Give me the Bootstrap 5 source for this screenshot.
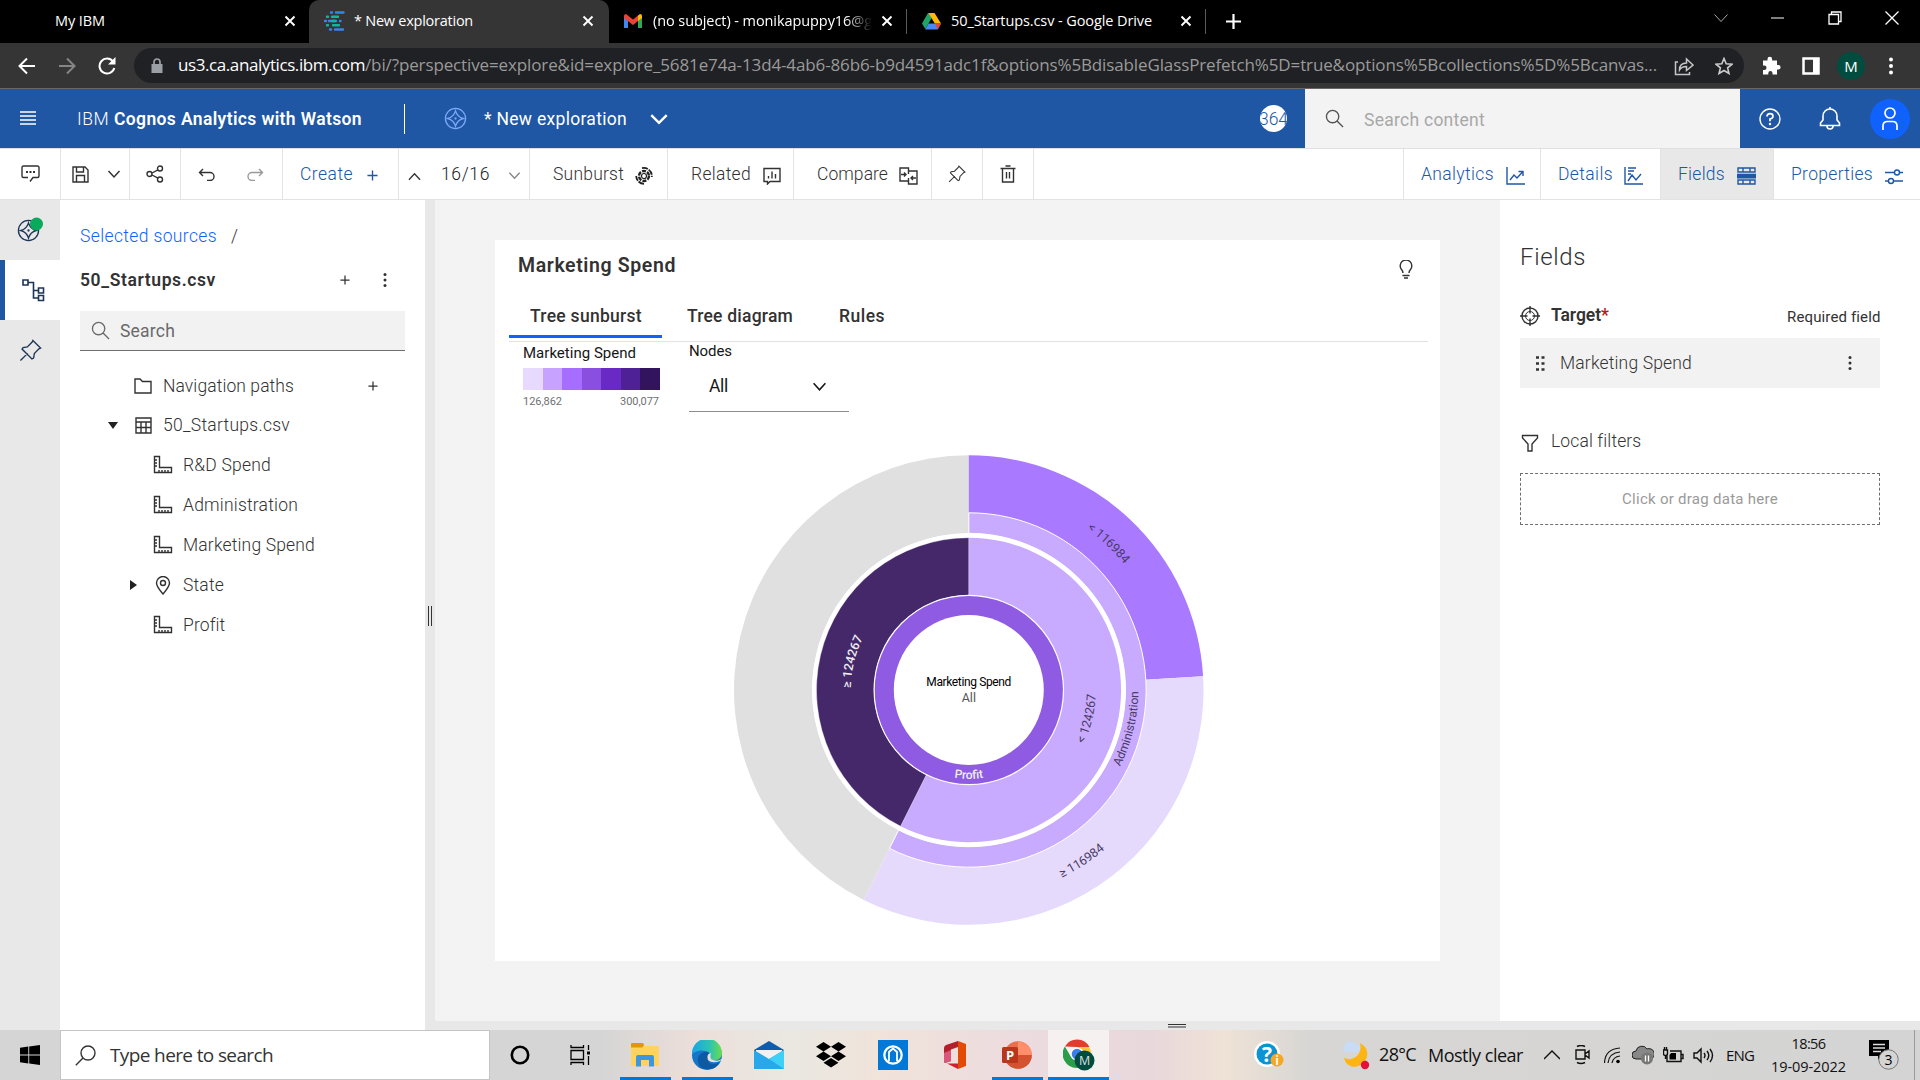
<!DOCTYPE html>
<html lang="en">
<head>
<meta charset="utf-8">
<title>* New exploration</title>
<link rel="stylesheet" href="https://cdn.jsdelivr.net/npm/bootstrap@5.3.0/dist/css/bootstrap.min.css">
<style>
html,body{width:1920px;height:1080px;overflow:hidden}
body{font-family:Roboto,"Open Sans",sans-serif;font-size:17.5px;font-weight:300;line-height:1.2;color:#323232;background:#fff}
b{font-weight:600}
svg{display:block;flex:none}
.ln{fill:none;stroke:currentColor;stroke-width:1.4}
[data-w]{display:block;white-space:nowrap;flex:none}
.sys{font-family:"Open Sans","Noto Sans",sans-serif;font-weight:400}
/* browser window */
.tabstrip{height:43px;background:#000;color:#fff;font-size:14.5px}
.btab{height:43px;flex:none;padding-bottom:1px}
.btab1{width:309px;padding:0 13px 1px 55px}
.btab2{width:300px;padding:0 15px 1px 14px;background:#353535;border-radius:10px 10px 0 0}
.btab3{width:297px;padding:0 13px 1px 15px}
.btab4{width:298px;padding:0 13px 1px 15px}
.vsep{width:1px;height:25px;background:#5a5a5a}
.fade-end{width:219px;overflow:hidden;-webkit-mask-image:linear-gradient(90deg,#000 88%,transparent);mask-image:linear-gradient(90deg,#000 88%,transparent)}
.winc{width:57px;height:36px}
.addr{height:46px;background:#353535;border-bottom:1px solid #666;color:#fff}
.c40{width:40px;flex:none}
.pill{width:1610px;height:35px;border-radius:18px;background:#202124;font-size:17px;color:#9a9a9a;padding-left:16px}
.av{width:28px;height:28px;border-radius:50%;background:#004d40;font-size:15px;color:#fff}
/* application header */
.apphead{height:60px;background:#1f57a4;border-bottom:1px solid #e0e0e0;color:#fff}
.apphead .rule{width:1px;height:30px;background:#fff}
.apphead span{padding-top:1px}
.trial{width:27px;height:27px;border-radius:50%;background:#fff;color:#1f57a4;overflow:hidden}
.gsearch{width:435px;height:59px;background:#f3f3f3;color:#a8a8a8;padding-left:20px}
.apphead .gsearch span{padding-top:3px}
.c60{width:60px;flex:none}
.usr{width:40px;height:40px;border-radius:50%;background:#0f62fe}
.tools{height:51px;border-bottom:1px solid #e3e3e3;background:#fff}
.tc{height:50px;border-right:1px solid #e3e3e3;flex:none}
.tc.blue,.blue{color:#2157a4}
/* gaps between neighbours */
.s7{margin-left:7px}.s9{margin-left:9px}.s10{margin-left:10px}.s11{margin-left:11px}.s12{margin-left:12px}.s14{margin-left:14px}.s17{margin-left:17px}.s18{margin-left:18px}.s20{margin-left:20px}.s23{margin-left:23px}.s32{margin-left:32px}.s41{margin-left:41px}.s42{margin-left:42px}.s39{margin-left:39px}
.w61{width:61px}.w69{width:69px}.w51{width:51px}.w102{width:102px}.w116{width:116px}.w131{width:131px}.w138{width:138px}.w126{width:126px}.w137{width:137px}.w120{width:120px}.w113{width:113px}.w146{width:146px}
.mt3{margin-top:3px}
/* workspace */
.work{height:830px}
.work>*{flex:none}
.rail{width:60px;background:#e8e8e8;color:#1d3557}
.rail>div{height:60px}
.rail .on{background:#fff;box-shadow:inset 5px 0 #1f57a4}
.src{width:365px;padding:0 20px}
.src .r1{height:72px}.src .r2{height:16px}
.srch{height:40px;margin-top:23px;background:#f2f2f2;border-bottom:1px solid #6f6f6f;padding-left:11px;color:#6a6a6a}
.srch span{padding-top:1px}
.trow{height:40px}
.trow.first{margin-top:15px;margin-bottom:-1px}
.split{width:10px;background:#e8e8e8}
.handle{width:4px;height:20px;border:solid #333;border-width:0 1px;margin-bottom:-2px}
.canvas{background:#f3f3f3;width:1065px;padding:40px 0 0 60px}
.vis{width:945px;height:721px;background:#fff}
.vis .head{height:50px;padding:1px 27px 0 23px;font-size:19.5px;font-weight:600}
.vtabs{height:52px;margin:0 12px 0 14px;border-bottom:1px solid #e3e3e3;font-weight:500}
.vtab{height:48px;width:153px;border-bottom:3px solid transparent;padding:16px 0 0 21px}
.vtab.on{border-color:#0f62fe}
.ctl{height:70px;padding-left:28px;color:#161616;font-size:15px}
.swatch>i{width:19.5px;height:22px}
.tiny{font-size:11px;color:#6f6f6f}
.sel{width:160px;height:52px;border-bottom:1px solid #8d8d8d;padding:2px 0 0 20px;font-size:17.5px}
.fieldp{width:420px;padding:0 40px 0 20px}
.chip{height:50px;background:#f2f2f2;padding-left:16px}
.drop{height:52px;border:1px dashed #6f6f6f;color:#9a9a9a;font-size:15px}
.strip{height:9px;background:#e8e8e8;width:1485px}
.hbar{width:18px;height:4px;border:solid #333;border-width:1px 0 2px;border-bottom-color:#8d8d8d;margin-left:733px;margin-top:3px}
/* taskbar */
.task{height:50px;color:#111;background:linear-gradient(90deg,#d5d5d5 600px,#eddfda 700px,#e9e8e1 790px,#f0e3da 880px,#ecdbdf 1020px,#e8d8dc 1150px,#efe2d6 1225px,#d7d6d4 1310px,#d4d4d4 100%)}
.tsearch{width:430px;height:50px;background:#fff;border:1px solid #c5c5c5;font-size:19px;color:#333;padding-left:14px}
.app{width:62px;height:50px;position:relative}
.app.run::after{content:"";position:absolute;left:6px;right:5px;bottom:0;height:3px;background:#0078d7}
.app.cur{background:#f6f1f1;width:61px}
.app.cur::after{left:0;right:0}
.pad3{width:4px}
</style>
</head>
<body class="d-flex flex-column">

<svg width="0" height="0" class="position-absolute">
 <defs>
 <symbol id="x" viewBox="0 0 12 12"><path d="M1.500 1.500l9 9M10.500 1.500l-9 9" stroke="currentColor" stroke-width="1.900"/></symbol>
 <symbol id="down" viewBox="0 0 14 14"><path d="M1.500 4l5.500 6 5.500-6" fill="none" stroke="currentColor" stroke-width="1.500"/></symbol>
 <symbol id="plus" viewBox="0 0 12 12"><path d="M6 .5v11M.5 6h11" stroke="currentColor" stroke-width="1.500"/></symbol>
 <symbol id="dots" viewBox="0 0 6 16"><g fill="currentColor"><circle cx="3" cy="2.500" r="1.500"/><circle cx="3" cy="8" r="1.500"/><circle cx="3" cy="13.500" r="1.500"/></g></symbol>
 <symbol id="mag" viewBox="0 0 20 20"><circle cx="8" cy="8" r="6.500" class="ln"/><path d="M12.700 12.700L19 19" class="ln"/></symbol>
 <symbol id="compass" viewBox="0 0 24 24"><circle cx="12" cy="12" r="10.500" class="ln"/><path d="M12 4q1.800 6.200 8 8q-6.200 1.800-8 8q-1.800-6.200-8-8q6.200-1.800 8-8z" class="ln"/><circle cx="12" cy="12" r="1.200" fill="currentColor"/></symbol>
 <symbol id="pin" viewBox="0 0 24 24"><path d="M1.500 22.500l7.500-7.500M14.500 1.500l8 8-1.700.7L16 15.300l-.8 4.700-1.700.8L3.200 10.500l1-1.500 4.500-.7 5-5.100z" class="ln"/></symbol>
 <symbol id="ruler" viewBox="0 0 20 20"><path d="M1.500 1.500h5v11h12v5h-17zM1.500 5h2.500M1.500 8h2.500M1.500 11h2.500M6 17.500v-2.500M9 17.500v-2.500M12 17.500v-2.500M15 17.500v-2.500" class="ln"/></symbol>
 </defs>
</svg>

<div class="tabstrip sys d-flex align-items-center">
 <div class="btab btab1 d-flex align-items-center"><span data-w="50">My IBM</span><svg class="ms-auto" width="12" height="12"><use href="#x"/></svg></div>
 <div class="btab btab2 d-flex align-items-center">
  <svg width="22" height="20" viewBox="0 0 22 20"><g stroke-width="2.400" stroke-linecap="round"><path d="M8 1.500h1M13 1.500h7.500M6 10h7M2 10h1M17 10h.5M7 18.500h1M12 18.500h8" stroke="#3b82f0"/><path d="M4 5.700h1M9 5.700h6M10 14.300h6M4 14.300h1M9 10h3" stroke="#12b5a0"/></g></svg>
  <span class="s9" data-w="119">* New exploration</span><svg class="ms-auto" width="12" height="12"><use href="#x"/></svg></div>
 <div class="btab btab3 d-flex align-items-center">
  <svg width="18" height="14" viewBox="0 0 18 14"><path d="M0 2v12h4V5z" fill="#4285f4"/><path d="M18 2v12h-4V5z" fill="#34a853"/><path d="M14 1.500L16 0q2 0 2 2v2l-4 3z" fill="#fbbc04"/><path d="M0 2q0-2 2-2l7 5.500L14 1.500V7L9 11 0 4z" fill="#ea4335"/></svg>
  <div class="s11 fade-end"><span data-w="219">(no subject) - monikapuppy16@g</span></div><svg class="ms-auto" width="12" height="12"><use href="#x"/></svg></div>
 <div class="vsep"></div>
 <div class="btab btab4 d-flex align-items-center">
  <svg width="19" height="17" viewBox="0 0 19 17"><path d="M6 0h6.500L6.500 10.500 3.300 16 0 10.500z" fill="#1fa463"/><path d="M6.500 0h6L19 10.500h-6.200z" fill="#ffba00"/><path d="M6.500 10.500H19L15.700 16.500H3.200z" fill="#4688f4"/><path d="M13 10.500h6l-3.300 6z" fill="#ea4335"/></svg>
  <span class="s10" data-w="201">50_Startups.csv - Google Drive</span><svg class="ms-auto" width="12" height="12"><use href="#x"/></svg></div>
 <div class="vsep"></div>
 <svg class="s20" width="15" height="15" viewBox="0 0 15 15"><path d="M7.500 0v15M0 7.500h15" stroke="#fff" stroke-width="2.200"/></svg>
 <div class="ms-auto d-flex align-self-start">
  <div class="winc d-flex align-items-center justify-content-center"><svg width="14" height="14" viewBox="0 0 14 14"><path d="M.5 3.500l6.500 7 6.500-7" stroke="#aaa" fill="none"/></svg></div>
  <div class="winc d-flex align-items-center justify-content-center"><svg width="13" height="2"><path d="M0 1h13" stroke="#fff"/></svg></div>
  <div class="winc d-flex align-items-center justify-content-center"><svg width="14" height="14" viewBox="0 0 14 14"><path d="M1 3.500h9.500V13H1zM3.500 3V1H13v9.500h-2.500" fill="none" stroke="#fff" stroke-width="1.300"/></svg></div>
  <div class="winc d-flex align-items-center justify-content-center"><svg width="14" height="14" viewBox="0 0 14 14"><path d="M.5.5l13 13M13.500.5l-13 13" stroke="#fff" stroke-width="1.300"/></svg></div>
 </div>
</div>

<div class="addr sys d-flex align-items-center">
 <div class="d-flex s7">
  <div class="c40 d-flex justify-content-center"><svg width="18" height="18" viewBox="0 0 18 18"><path d="M17 9H2M9 1.500L1.500 9 9 16.500" fill="none" stroke="#fff" stroke-width="2"/></svg></div>
  <div class="c40 d-flex justify-content-center"><svg width="18" height="18" viewBox="0 0 18 18"><path d="M1 9h15M9 1.500L16.500 9 9 16.500" fill="none" stroke="#858585" stroke-width="2"/></svg></div>
  <div class="c40 d-flex justify-content-center"><svg width="18" height="18" viewBox="0 0 18 18"><path d="M15 4.500A7.500 7.500 0 1 0 16.300 11" fill="none" stroke="#fff" stroke-width="2"/><path d="M17.500 0v7.500H10z" fill="#fff"/></svg></div>
 </div>
 <div class="pill s7 d-flex align-items-center">
  <svg width="14" height="16" viewBox="0 0 14 16"><path d="M1.500 6h11v9h-11z" fill="#9aa0a6"/><path d="M4 6V4a3 3 0 0 1 6 0v2" stroke="#9aa0a6" stroke-width="1.700" fill="none"/></svg>
  <span class="s14 text-white" data-w="187">us3.ca.analytics.ibm.com</span><span data-w="1292">/bi/?perspective=explore&amp;id=explore_5681e74a-13d4-4ab6-86b6-b9d4591adc1f&amp;options%5BdisableGlassPrefetch%5D=true&amp;options%5Bcollections%5D%5Bcanvas...</span>
  <div class="c40 s7 d-flex justify-content-center"><svg width="20" height="20" viewBox="0 0 20 20" fill="none" stroke="#c4c7c5" stroke-width="1.500"><path d="M4 6H1.500v12.500h14V16"/><path d="M5.500 14q0-7 7-7V3l6.500 6-6.500 5.500v-4q-5 0-7 3.500z"/></svg></div>
  <div class="c40 d-flex justify-content-center"><svg width="18" height="18" viewBox="0 0 18 18"><path d="M9 1.500l2.200 5.300 5.800.4-4.400 3.700 1.400 5.600L9 13.500l-5 3 1.400-5.600L1 7.200l5.800-.4z" fill="none" stroke="#ccc" stroke-width="1.600"/></svg></div>
 </div>
 <div class="d-flex s7 align-items-center">
  <div class="c40 d-flex justify-content-center"><svg width="19" height="19" viewBox="0 0 19 19"><path d="M1 4.500h4.500v-1.500a2.300 2.300 0 0 1 4.600 0v1.500H15V9h1.300a2.300 2.300 0 0 1 0 4.600H15V18.500h-4.500V17a2 2 0 0 0-4.200 0v1.500H1v-4.500h1.300a2.200 2.200 0 0 0 0-4.500H1z" fill="#fff"/></svg></div>
  <div class="c40 d-flex justify-content-center"><svg width="18" height="18"><path d="M1.500 1.500h15v15h-15z" fill="none" stroke="#fff" stroke-width="2.500"/><path d="M11 2h6v14h-6z" fill="#fff"/></svg></div>
  <div class="c40 d-flex justify-content-center"><div class="av d-flex align-items-center justify-content-center">M</div></div>
  <div class="c40 d-flex justify-content-center"><svg width="6" height="20" viewBox="0 0 6 20" fill="#fff"><circle cx="3" cy="3.500" r="2"/><circle cx="3" cy="10" r="2"/><circle cx="3" cy="16.500" r="2"/></svg></div>
 </div>
</div>

<header class="apphead d-flex align-items-center">
 <svg class="s20" width="16" height="15"><path d="M0 1h16M0 5h16M0 9h16M0 13h16" stroke="#fff" stroke-width="1.400"/></svg>
 <div class="s41 d-flex"><span data-w="37">IBM&nbsp;</span><b><span data-w="248">Cognos Analytics with Watson</span></b></div>
 <div class="rule s42"></div>
 <svg class="s39" width="23" height="23" style="color:#7aa8f5"><use href="#compass"/></svg>
 <span class="s17 fw-normal" data-w="143">* New exploration</span>
 <svg width="18" height="18" class="s23" viewBox="0 0 14 14"><path d="M1 4l6 6 6-6" fill="none" stroke="#fff" stroke-width="1.900"/></svg>
 <div class="trial ms-auto d-flex align-items-center justify-content-center"><span data-w="29">364</span></div>
 <div class="gsearch s18 d-flex align-items-center"><svg width="19" height="19" style="color:#525252"><use href="#mag"/></svg><span class="s20 fw-normal" data-w="121">Search content</span></div>
 <div class="c60 d-flex justify-content-center"><svg width="22" height="22" viewBox="0 0 22 22"><circle cx="11" cy="11" r="10" class="ln"/><path d="M8 8.500q0-2.800 3-2.800t3 2.600q0 2.200-3 2.700v2.200" class="ln" style="stroke-width:1.700"/><circle cx="11" cy="16" r="1.200" fill="#fff"/></svg></div>
 <div class="c60 d-flex justify-content-center"><svg width="22" height="23" viewBox="0 0 22 23"><path d="M11 0v2M1.500 18.500h19v-2.500l-2.500-3V9a7 7 0 0 0-14 0v4l-2.500 3zM8 19q0 3 3 3t3-3" class="ln" style="stroke-width:1.600"/></svg></div>
 <div class="c60 d-flex justify-content-center"><div class="usr d-flex align-items-center justify-content-center"><svg width="18" height="24" viewBox="0 0 18 24"><circle cx="9" cy="6" r="5" class="ln" style="stroke-width:1.700"/><path d="M2 23v-4q0-4.500 4.500-4.500h5q4.500 0 4.500 4.500v4" class="ln" style="stroke-width:1.700"/></svg></div></div>
</header>

<div class="tools d-flex">
 <div class="tc w61 d-flex align-items-center justify-content-center"><svg width="19" height="18" viewBox="0 0 19 18"><path d="M9 16.500l3-4h4.500q1.500 0 1.500-1.500V2.500Q18 1 16.500 1h-14Q1 1 1 2.500V11q0 1.500 1.500 1.500H7" class="ln"/><path d="M5 7h2M8.500 7h2M12 7h2" stroke="#333" stroke-width="1.800"/></svg></div>
 <div class="tc w69 d-flex align-items-center"><svg class="s11" width="17" height="17" viewBox="0 0 17 17"><path d="M1 1h12l3 3v12H1zM4.500 1v5h7V1M4.500 16v-6.500h8V16" class="ln"/></svg><svg class="s18" width="14" height="14"><use href="#down"/></svg></div>
 <div class="tc w51 d-flex align-items-center justify-content-center"><svg width="18" height="18" viewBox="0 0 18 18"><g class="ln"><circle cx="3.500" cy="9" r="2.500"/><circle cx="14" cy="3.500" r="2.500"/><circle cx="14" cy="14.500" r="2.500"/><path d="M6 8l6-3.200M6 10l6 3.200"/></g></svg></div>
 <div class="tc w102 d-flex align-items-center"><svg class="s17" width="17" height="13" viewBox="0 0 17 13"><path d="M5 1L1.500 4.500 5 8M1.500 4.500H12a4 4 0 0 1 0 8H9" class="ln"/></svg><svg class="s32" width="17" height="13" viewBox="0 0 17 13" style="color:#999"><path d="M12 1l3.500 3.500L12 8M15.500 4.500H5a4 4 0 0 0 0 8h3" class="ln"/></svg></div>
 <div class="tc blue w116 d-flex align-items-center"><span class="s17" data-w="53">Create</span><svg class="s14 mt3" width="11" height="11"><use href="#plus"/></svg></div>
 <div class="tc w131 d-flex align-items-center"><svg class="s9" width="13" height="13" viewBox="0 0 14 14" style="margin-top:5px"><path d="M1 10.500L7 4l6 6.500" class="ln"/></svg><span class="s20 text-dark" data-w="49">16/16</span><svg class="s18 mt3" width="13" height="13" style="color:#888"><use href="#down"/></svg></div>
 <div class="tc w138 d-flex align-items-center"><span class="s23" data-w="71">Sunburst</span><svg class="s11 mt3" width="18" height="18" viewBox="0 0 18 18"><g fill="none" stroke="#222"><circle cx="9" cy="9" r="2.500" stroke-width="1.200"/><circle cx="9" cy="9" r="5" stroke-width="2.400" stroke-dasharray="4 1.240"/><path d="M7 1.200A8 8 0 0 1 16.800 10" stroke-width="1.800" stroke-dasharray="6 1"/><path d="M9 16.800A8 8 0 0 1 1.200 9" stroke-width="1.800" stroke-dasharray="6 1"/></g></svg></div>
 <div class="tc w126 d-flex align-items-center"><span class="s23" data-w="60">Related</span><svg class="s12 mt3" width="18" height="18" viewBox="0 0 18 18"><path d="M1 1.500h16v13H7L4.500 17v-2.500H1zM5.500 11.500V9M9 11.500V4.500M12.500 11.500V7" class="ln"/></svg></div>
 <div class="tc w138 d-flex align-items-center"><span class="s23" data-w="71">Compare</span><svg class="s11 mt3" width="19" height="18" viewBox="0 0 19 18"><path d="M9.500 4V1H1v13h8.500V11M9.500 14.500V17H18V4H9.500v3M2 7.500h5M5 5.500l2 2-2 2M17 11h-5M14 9l-2 2 2 2" class="ln"/></svg></div>
 <div class="tc w51 d-flex align-items-center justify-content-center"><svg width="18" height="18"><use href="#pin"/></svg></div>
 <div class="tc w51 d-flex align-items-center justify-content-center"><svg width="16" height="18" viewBox="0 0 16 18"><path d="M.5 3.500h15M5.500 1h5M2.500 3.500V17h11V3.500M6.500 7v6.500M9.500 7v6.500" class="ln"/></svg></div>
 <div class="ms-auto tc" style="width:1px"></div>
 <div class="tc blue w137 d-flex align-items-center"><span class="s17" data-w="73">Analytics</span><svg class="s12 mt-1" width="19" height="18" viewBox="0 0 19 18"><path d="M1 0v17h18M4 13l4-5 3 3 6-6.500M12.500 4.500H17V9" class="ln"/></svg></div>
 <div class="tc blue w120 d-flex align-items-center"><span class="s17" data-w="55">Details</span><svg class="s11 mt-1" width="19" height="18" viewBox="0 0 19 18"><path d="M1 0v17h18M4 14l4-6 4 5 5-6M4 1h8M4 4h6M4 7h3" class="ln"/></svg></div>
 <div class="tc blue w113 d-flex align-items-center" style="background:#e8e8e8"><span class="s17" data-w="47">Fields</span><svg class="s12 mt-1" width="19" height="18" viewBox="0 0 19 18"><path d="M1 1h17v4H1zM1 13h17v4H1zM6 1v4M13 1v4M6 13v4M13 13v4" class="ln"/><path d="M0 6.700h19v4.800H0z" fill="#1f57a4"/></svg></div>
 <div class="blue w146 d-flex align-items-center"><span class="s17" data-w="82">Properties</span><svg class="s12 mt-1" width="18" height="17" viewBox="0 0 18 17"><g class="ln"><circle cx="12" cy="4.500" r="2.500"/><circle cx="6" cy="13" r="2.500"/><path d="M0 4.500h9.500M14.500 4.500H18M0 13h3.500M8.500 13H18"/></g></svg></div>
</div>

<main class="work d-flex">
 <nav class="rail">
  <div class="d-flex align-items-center justify-content-center"><svg width="26" height="26" viewBox="0 0 26 26"><g transform="translate(0 2)"><use href="#compass" width="23" height="23"/></g><circle cx="19.500" cy="7" r="6.500" fill="#0aaa5c"/></svg></div>
  <div class="on d-flex align-items-center justify-content-center"><svg class="s7" width="23" height="23" viewBox="0 0 23 23"><path d="M1 1h5v5H1zM16.500 9h5v5h-5zM16.500 16.500h5v5h-5zM6 3.500h5.500V19h5M11.500 11.500h5" class="ln" style="stroke-width:1.600"/></svg></div>
  <div class="d-flex align-items-center justify-content-center"><svg width="23" height="23"><use href="#pin"/></svg></div>
 </nav>
 <aside class="src">
  <div class="r1 d-flex align-items-center"><span style="color:#0f62fe" data-w="137">Selected sources</span><span class="s14" data-w="6">/</span></div>
  <div class="r2 d-flex align-items-center"><b data-w="136">50_Startups.csv</b><svg class="ms-auto" width="10" height="10"><use href="#plus"/></svg><svg style="margin:0 17px 0 32px" width="6" height="16"><use href="#dots"/></svg></div>
  <div class="srch d-flex align-items-center"><svg width="19" height="19"><use href="#mag"/></svg><span class="s10 fw-normal" data-w="55">Search</span></div>
  <div class="trow first d-flex align-items-center"><svg style="margin-left:54px" width="18" height="16" viewBox="0 0 18 16"><path d="M1 1h5l2.500 2.500H17V15H1z" class="ln"/></svg><span class="s11" data-w="131">Navigation paths</span><svg style="margin-left:74px" width="10" height="10"><use href="#plus"/></svg></div>
  <div class="trow d-flex align-items-center"><svg style="margin-left:28px" width="10" height="7"><path d="M0 0h10L5 7z" fill="#222"/></svg><svg class="s17" width="17" height="17" viewBox="0 0 17 17"><path d="M1 1h15v15H1zM1 5h15M1 10.500h15M6 5v11M11 5v11" class="ln"/></svg><span class="s11" data-w="127">50_Startups.csv</span></div>
  <div class="trow d-flex align-items-center"><svg style="margin-left:73px" width="20" height="20"><use href="#ruler"/></svg><span class="s10" data-w="88">R&amp;D Spend</span></div>
  <div class="trow d-flex align-items-center"><svg style="margin-left:73px" width="20" height="20"><use href="#ruler"/></svg><span class="s10" data-w="115">Administration</span></div>
  <div class="trow d-flex align-items-center"><svg style="margin-left:73px" width="20" height="20"><use href="#ruler"/></svg><span class="s10" data-w="132">Marketing Spend</span></div>
  <div class="trow d-flex align-items-center"><svg style="margin-left:50px" width="7" height="10"><path d="M0 0v10l7-5z" fill="#222"/></svg><svg class="s18" width="16" height="19" viewBox="0 0 16 19"><path d="M8 18Q1.500 10.500 1.500 7a6.500 6.500 0 0 1 13 0Q14.500 10.500 8 18z" class="ln"/><circle cx="8" cy="7" r="2.500" class="ln"/></svg><span class="s12" data-w="41">State</span></div>
  <div class="trow d-flex align-items-center"><svg style="margin-left:73px" width="20" height="20"><use href="#ruler"/></svg><span class="s10" data-w="42">Profit</span></div>
 </aside>
 <div class="split d-flex align-items-center justify-content-center"><div class="handle"></div></div>
 <div class="d-flex flex-column">
 <div class="d-flex flex-grow-1">
 <section class="canvas">
  <div class="vis">
   <div class="head d-flex align-items-center"><span data-w="158">Marketing Spend</span><svg class="ms-auto mt-2" width="14" height="19" viewBox="0 0 14 19"><path d="M4 13q0-2-1.500-3.500a5.800 5.800 0 1 1 9 0Q10 11 10 13M3.500 15.500h7M5 18h4" class="ln"/></svg></div>
   <div class="vtabs d-flex">
    <div class="vtab on"><span data-w="112">Tree sunburst</span></div>
    <div class="vtab" style="padding-left:25px"><span data-w="106">Tree diagram</span></div>
    <div class="vtab" style="padding-left:24px"><span data-w="46">Rules</span></div>
   </div>
   <div class="ctl d-flex fw-normal">
    <div style="width:166px;padding-top:2px"><span data-w="113">Marketing Spend</span>
     <div class="swatch d-flex" style="margin-top:6px"><i style="background:#e8daff"></i><i style="background:#c8a2ff"></i><i style="background:#a56eff"></i><i style="background:#8a4fde"></i><i style="background:#6929c4"></i><i style="background:#4f2196"></i><i style="background:#31135e"></i></div>
     <div class="tiny d-flex justify-content-between" style="width:136px;margin-top:5px"><span data-w="39">126,862</span><span data-w="39">300,077</span></div></div>
    <div><span data-w="43">Nodes</span><div class="sel d-flex align-items-center"><span data-w="19">All</span><svg style="margin-left:84px" width="15" height="15"><use href="#down"/></svg></div></div>
   </div>
   <div class="d-flex justify-content-center" style="margin-top:38px">
   <svg width="480" height="480" viewBox="-240.800 -240 480 480" font-size="12.500">
    <defs>
     <path id="o1" d="M-200 0A200 200 0 0 1 200 0"/><path id="o2" d="M-209.500 0A209.500 209.500 0 0 0 209.500 0"/>
     <path id="m1" d="M-118 0A118 118 0 0 1 118 0"/><path id="m2" d="M-127 0A127 127 0 0 0 127 0"/>
     <path id="a1" d="M-169.500 0A169.500 169.500 0 0 0 169.500 0"/><path id="p1" d="M-89 0A89 89 0 0 0 89 0"/>
    </defs>
    <path fill="#e0e0e0" d="M-105.100 209.900A234.700 234.700 0 0 1 0-234.700V-156.700A156.700 156.700 0 0 0-70.200 140.100z"/>
    <path fill="#a97aff" d="M0-234.700A234.700 234.700 0 0 1 234.300-13.700L176.400-10.300A176.700 176.700 0 0 0 0-176.700z"/>
    <path fill="#e5dafb" d="M234.300-13.700A234.700 234.700 0 0 1-105.100 209.900L-79.100 158A176.700 176.700 0 0 0 176.400-10.300z"/>
    <path fill="#c8abfe" stroke="#fff" d="M0-177.200A177.200 177.200 0 1 1-79.300 158.400L-70.200 140.100A156.700 156.700 0 1 0 0-156.700z"/>
    <circle r="154.500" fill="none" stroke="#fff" stroke-width="4.400"/>
    <path fill="#c8abfe" d="M0-152.300A152.300 152.300 0 1 1-68.200 136.200L-42.400 84.700A94.700 94.700 0 1 0 0-94.700z"/>
    <path fill="#44286a" stroke="#fff" stroke-width=".4" d="M-68.200 136.200A152.300 152.300 0 0 1 0-152.300V-94.700A94.700 94.700 0 0 0-42.400 84.700z"/>
    <circle r="94.700" fill="#8f5be2" stroke="#fff" stroke-width="1.200"/><circle r="75" fill="#fff"/>
    <g text-anchor="middle" font-weight="400" fill="#4a3a66">
     <text transform="rotate(43.600)"><textPath href="#o1" startOffset="50%">&lt; 116984</textPath></text>
     <text transform="rotate(-33.400)"><textPath href="#o2" startOffset="50%">≥ 116984</textPath></text>
     <text transform="rotate(-76.500)"><textPath href="#m2" startOffset="50%">&lt; 124267</textPath></text>
     <text transform="rotate(-76.300)" font-size="12"><textPath href="#a1" startOffset="50%">Administration</textPath></text>
     <text transform="rotate(-76.300)" fill="#eee" font-weight="500"><textPath href="#m1" startOffset="50%">≥ 124267</textPath></text>
     <text fill="#eee" font-weight="500" font-size="12"><textPath href="#p1" startOffset="50%">Profit</textPath></text>
     <text y="-4" fill="#000" font-size="12" textLength="85">Marketing Spend</text><text y="12" fill="#555">All</text>
    </g>
   </svg></div>
  </div>
 </section>
 <aside class="fieldp">
  <div style="height:92px;padding-top:43px;font-size:24px"><span data-w="66">Fields</span></div>
  <div class="d-flex align-items-center" style="height:46px;padding-top:1px"><svg width="20" height="20" viewBox="0 0 20 20"><g class="ln"><circle cx="10" cy="10" r="8"/><circle cx="10" cy="10" r="4.500" stroke-width="1"/><path d="M10 0v7.500M10 12.500V20M0 10h7.500M12.500 10H20"/></g></svg><b class="s11" data-w="50">Target</b><b style="color:#b81921">*</b><span class="ms-auto fw-normal" style="font-size:15px;padding-top:2px" data-w="93">Required field</span></div>
  <div class="chip d-flex align-items-center"><svg width="9" height="15" viewBox="0 0 9 15"><path d="M0 1.500h3M5.500 1.500h3M0 7.500h3M5.500 7.500h3M0 13.500h3M5.500 13.500h3" stroke="#333" stroke-width="2.600"/></svg><span style="margin-left:15px" data-w="132">Marketing Spend</span><svg class="ms-auto" style="margin-right:27px" width="6" height="16"><use href="#dots"/></svg></div>
  <div class="d-flex align-items-center" style="height:85px;padding-top:21px"><svg class="mt-1" width="20" height="18" viewBox="0 0 20 18"><path d="M2.500 1.500h15V4L12 10v7H8v-7L2.500 4z" class="ln"/></svg><span class="s11" data-w="90">Local filters</span></div>
  <div class="drop d-flex align-items-center justify-content-center fw-normal"><span data-w="156">Click or drag data here</span></div>
 </aside>
 </div>
 <div class="strip d-flex"><div class="hbar"></div></div>
 </div>
</main>

<footer class="task sys d-flex align-items-center">
 <div class="c60 d-flex justify-content-center"><svg width="20" height="20" viewBox="0 0 20 20"><path d="M0 2.700L8.300 1.500v8H0zM9.200 1.400L20 0v9.500H9.200zM0 10.400h8.300v8L0 17.200zM9.200 10.400H20V20L9.200 18.500z" fill="#000"/></svg></div>
 <div class="tsearch d-flex align-items-center"><svg width="21" height="21" viewBox="0 0 21 21"><circle cx="13" cy="8" r="7" class="ln"/><path d="M8 13L.8 20.200" class="ln"/></svg><span class="s14" data-w="163">Type here to search</span></div>
 <div class="c60 d-flex justify-content-center"><svg width="20" height="20"><circle cx="10" cy="10" r="8.200" fill="none" stroke="#000" stroke-width="2.600"/></svg></div>
 <div class="c60 d-flex justify-content-center"><svg width="20" height="20" viewBox="0 0 20 20"><path d="M1 5.500h12.500v9H1zM1 0v2.500h12.500V0M1 20v-2.500h12.500V20M18.500 0v5M18.500 11v9" fill="none" stroke="#000" stroke-width="1.300"/><path d="M17 6.500h3v3h-3z"/></svg></div>
 <div class="pad3"></div>
 <div class="app run d-flex align-items-center justify-content-center"><svg width="28" height="24" viewBox="0 0 28 24"><path d="M0 0h12l2 3H28v20H0z" fill="#ffd45e"/><path d="M0 1q0-1 1-1h11l1 2-1.500 2.500H0z" fill="#dc9a06"/><path d="M5 23.500V14q0-2 2-2h14q2 0 2 2v9.500h-5V17h-8v6.500z" fill="#3c97dd"/></svg></div>
 <div class="app run d-flex align-items-center justify-content-center"><svg width="30" height="30" viewBox="0 0 30 30"><defs><linearGradient id="eg"><stop stop-color="#1aa3e8"/><stop offset=".6" stop-color="#2fc4b0"/><stop offset="1" stop-color="#6bdc4c"/></linearGradient></defs><circle cx="15" cy="15" r="15" fill="#1575c8"/><path d="M0 14A15 15 0 0 1 30 13q0 6-7 7.500-6 .5-5-2.500 1.500-5-4-7-8-2-14 3z" fill="url(#eg)"/><path d="M8 27Q2 16 12 12q6-1 6 3.500-3 2.500-2 6 3 4.500 12 1-6 9-17 6z" fill="#0c59a4"/><path d="M19 13q-5 1-3 7 4 4 12 1l3-3q-6 5-12 1-1-3 0-6z" fill="#e9e0da"/></svg></div>
 <div class="app d-flex align-items-center justify-content-center"><svg width="30" height="28" viewBox="0 0 30 28"><path d="M0 9L15 0l15 9v4H0z" fill="#0c5dab"/><path d="M2 9h26v10H2z" fill="#f1f1f3"/><path d="M0 9l15 9L30 9v19H0z" fill="#28a8ea"/><path d="M30 9v19L15 18z" fill="#3fd0f7"/></svg></div>
 <div class="app d-flex align-items-center justify-content-center"><svg width="30" height="26" viewBox="0 0 30 26"><path d="M7.500 0L15 4.700 7.500 9.500 0 4.700zM22.500 0L30 4.700l-7.500 4.800L15 4.700zM7.500 9.600l7.500 4.700-7.500 4.800L0 14.300zM22.500 9.600l7.500 4.700-7.500 4.800-7.500-4.800zM15 16l7.500 4.800L15 25.500l-7.500-4.700z" fill="#000"/></svg></div>
 <div class="app d-flex align-items-center justify-content-center"><svg width="30" height="30" viewBox="0 0 30 30"><path d="M0 0h30v30H0z" fill="#0078d7"/><circle cx="15" cy="15" r="8.700" fill="none" stroke="#fff" stroke-width="2.300"/><path d="M11 21V12l4-3.500 4 3.500v9" fill="none" stroke="#fff" stroke-width="1.800"/></svg></div>
 <div class="app d-flex align-items-center justify-content-center"><svg width="22" height="28" viewBox="0 0 22 28"><path d="M14 0l8 3v22l-8 3z" fill="#e34a06"/><path d="M14 0v6L7 8.500V20l-6 2q-1-.5-1-2V7q0-2 2-3z" fill="#b3202c"/><path d="M7 9v11l-6 2q-1-.5-1-2v-8z" fill="#d8577b"/><path d="M3 22.500h11V28z" fill="#cf2231"/></svg></div>
 <div class="app run d-flex align-items-center justify-content-center"><svg width="30" height="28" viewBox="0 0 30 28"><circle cx="16" cy="14" r="13.800" fill="#e8704c"/><path d="M16 .2A13.800 13.800 0 0 1 29.800 14H16z" fill="#ff8f6b"/><path d="M2.200 14h27.600a13.800 13.800 0 0 1-27.600 0z" fill="#d35230"/><rect y="6" width="16" height="16" rx="1.500" fill="#b9361b"/><text x="4" y="18.500" font-size="13" font-weight="700" fill="#fff">P</text></svg></div>
 <div class="app cur run d-flex align-items-center justify-content-center"><svg width="32" height="32" viewBox="0 0 32 32"><path d="M1.900 7.500A14 14 0 0 1 26.500 8H14z" fill="#e33b2e"/><path d="M26.200 8A14 14 0 0 1 14 29l6.500-13L14 8z" fill="#fcc934"/><path d="M1.900 7.500L8 18l8 4-2 7A14 14 0 0 1 1.900 7.500z" fill="#2b9c49"/><circle cx="14" cy="15" r="6.600" fill="#fff"/><circle cx="14" cy="15" r="5.300" fill="#3b7ded"/><circle cx="21.500" cy="21.500" r="10" fill="#004d40"/><text x="21.500" y="26" text-anchor="middle" font-size="12.500" fill="#ddd">M</text></svg></div>
 <svg style="margin-left:145px" width="30" height="28" viewBox="0 0 30 28"><circle cx="13" cy="13" r="13" fill="#fff"/><circle cx="13" cy="13" r="10.500" fill="#0c93d4"/><text x="13" y="20.500" text-anchor="middle" font-size="21" font-weight="700" fill="#fff">?</text><circle cx="23" cy="19" r="6.500" fill="#f5a623"/><text x="23" y="23.500" text-anchor="middle" font-size="12" font-weight="700" fill="#fff">i</text></svg>
 <svg style="margin-left:56px" width="30" height="30" viewBox="0 0 30 30"><path d="M20 3q9 5 7 14-3 9-13 10-8-1-10-9 8 3 13-2 5-5 3-13z" fill="#fdb515"/><path d="M5 12a4 4 0 0 1 0-7 5.500 5.500 0 0 1 10-1 4 4 0 0 1 2 8z" fill="#c8dcf5"/><circle cx="25" cy="25" r="4.200" fill="#e3123b"/></svg>
 <span class="s9" style="font-size:18px" data-w="37">28°C</span><span class="s12" style="font-size:18px;padding-top:2px" data-w="95">Mostly clear</span>
 <svg style="margin-left:21px" width="16" height="10" viewBox="0 0 16 10"><path d="M0 9l8-8 8 8" class="ln"/></svg>
 <svg style="margin-left:15px" width="15" height="20" viewBox="0 0 15 20"><path d="M1 5h9v9H1zM10 9l4-3v7l-4-3M2 1.500q4-2 8 0M2 17.500q4 2 8 0" class="ln"/></svg>
 <svg style="margin-left:14px" width="17" height="17" viewBox="0 0 17 17"><path d="M.5 16Q1 2 16 1M4 16Q5 6 16 5M8 16Q9 10 16 9" class="ln" style="stroke-width:1.200"/><circle cx="14" cy="14.500" r="1.800"/></svg>
 <svg style="margin-left:11px" width="22" height="20" viewBox="0 0 22 20"><path d="M4 14a4 4 0 0 1 0-8A6 6 0 0 1 15 4a5 5 0 0 1 4 10z" fill="#888" stroke="#222"/><circle cx="15" cy="13.500" r="6" fill="#777"/><path d="M13.500 10.500v6M16.500 10.500v6" stroke="#fff" stroke-width="1.300"/></svg>
 <svg style="margin-left:9px" width="21" height="17" viewBox="0 0 21 17"><path d="M4 8v6.500h14V4H7M18.500 7.500H20v4h-1.500M2.500 9v3M.5 3h4v3.500q0 2-2 2t-2-2zM1.500 0v3M3.500 0v3" class="ln"/><path d="M8 6h5v6.500H6.500V8z"/></svg>
 <svg style="margin-left:9px" width="21" height="17" viewBox="0 0 21 17"><path d="M1 6h3l4-4v13l-4-4H1zM11 6q2 2.500 0 5M14 4q3.500 4.500 0 9M17 2q5 6.500 0 13" class="ln"/></svg>
 <span style="margin-left:12px;font-size:15px" data-w="28">ENG</span>
 <div class="text-center" style="margin-left:17px;width:75px;font-size:14.500px"><div class="d-flex justify-content-center"><span data-w="34">18:56</span></div><div class="d-flex" style="margin-top:6px"><span data-w="75">19-09-2022</span></div></div>
 <svg style="margin-left:23px" width="31" height="32" viewBox="0 0 31 32"><path d="M0 1h20v16h-7l-4 4v-4H0z"/><path d="M4 5.500h12M4 9h12M4 12.500h8" stroke="#ddd" stroke-width="1.300"/><circle cx="19.500" cy="20.500" r="9.700" fill="#d4d4d4" stroke="#777"/><text x="19.500" y="25.500" text-anchor="middle" font-size="14" fill="#000">3</text></svg>
 <div style="width:1px;height:50px;background:#999;margin-left:14px"></div>
</footer>

<script src="https://cdn.jsdelivr.net/npm/bootstrap@5.3.0/dist/js/bootstrap.bundle.min.js"></script>
<script>
// Track every label so that it fills its column width whatever face is installed
document.querySelectorAll('[data-w]').forEach(function (el) {
  var w = +el.dataset.w, r = document.createRange();
  r.selectNodeContents(el);
  var natural = r.getBoundingClientRect().width;
  el.style.letterSpacing = ((w - natural) / el.textContent.length).toFixed(3) + 'px';
  el.style.width = w + 'px';
});
</script>
</body>
</html>
